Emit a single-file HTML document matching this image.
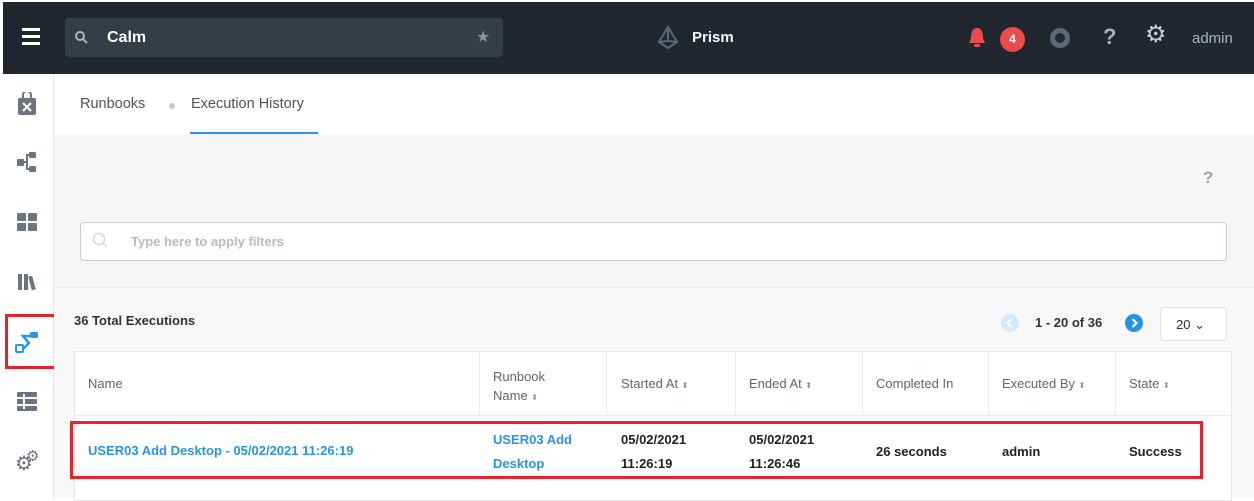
<!DOCTYPE html>
<html><head><meta charset="utf-8"><style>
*{box-sizing:border-box;margin:0;padding:0}
body{width:1254px;height:498px;overflow:hidden;background:#fff;font-family:"Liberation Sans",sans-serif;position:relative}
.a{position:absolute}
.top{left:3px;top:2px;width:1251px;height:72px;background:#22262e}
.th{font-size:13px;color:#5d6771}
.sort{font-size:8px;color:#8a939c}
.vl{position:absolute;top:352px;height:63px;width:1px;background:#ebebeb}
.td{font-size:13px;color:#222;font-weight:bold;line-height:24px}
</style></head><body>
<div class="a top"></div>
<div class="a" style="left:22px;top:28px;width:18px;height:3px;background:#fff;box-shadow:0 7px 0 #fff,0 14px 0 #fff"></div>
<div class="a" style="left:65px;top:18px;width:438px;height:39px;background:#363d47;border-radius:4px"></div>
<svg class="a" style="left:74px;top:30px" width="14" height="14"><circle cx="6" cy="6" r="4" stroke="#aab3bd" stroke-width="2" fill="none"/><line x1="9" y1="9" x2="13" y2="13" stroke="#aab3bd" stroke-width="2"/></svg>
<div class="a" style="left:107px;top:29px;font-size:16px;font-weight:bold;color:#fff">Calm</div>
<div class="a" style="left:476px;top:27px;font-size:16px;color:#8b949e">★</div>
<svg class="a" style="left:656px;top:25px" width="24" height="26"><path d="M12 2 L3 17 L12 23 L21 17 Z M12 2 L12 16 L3 17 M12 16 L21 17" fill="none" stroke="#5c6878" stroke-width="2"/></svg>
<div class="a" style="left:692px;top:29px;font-size:15px;font-weight:bold;color:#fff">Prism</div>
<svg class="a" style="left:966px;top:26px" width="22" height="22"><path d="M11 2 C6 2 5 7 5 12 L3 17 L19 17 L17 12 C17 7 16 2 11 2 Z" fill="#e84c4c"/><rect x="8" y="18" width="6" height="3" rx="1.5" fill="#e84c4c"/></svg>
<div class="a" style="left:1000px;top:27px;width:25px;height:25px;border-radius:50%;background:#ea4b4b;color:#fff;font-size:12px;font-weight:bold;text-align:center;line-height:25px">4</div>
<div class="a" style="left:1050px;top:28px;width:20px;height:20px;border-radius:50%;border:5px solid #5d6878"></div>
<div class="a" style="left:1103px;top:24px;font-size:22px;font-weight:bold;color:#aab3bd">?</div>
<div class="a" style="left:1145px;top:20px;font-size:24px;color:#c8cdd3">⚙</div>
<div class="a" style="left:1192px;top:30px;font-size:15px;color:#aab3bd">admin</div>
<!-- sidebar -->
<div class="a" style="left:53px;top:74px;width:1px;height:424px;background:#e3e6ea"></div>
<svg class="a" style="left:17px;top:92px" width="20" height="24"><rect x="1" y="6" width="18" height="17" rx="2" fill="#6b7580"/><path d="M6 7 V3 a4 4 0 0 1 8 0 V7" stroke="#6b7580" stroke-width="2" fill="none"/><path d="M6 11 L14 19 M14 11 L6 19" stroke="#fff" stroke-width="2"/></svg>
<svg class="a" style="left:16px;top:152px" width="22" height="22"><rect x="1" y="7" width="7" height="7" fill="#6b7580"/><rect x="13" y="0" width="7" height="6" rx="1" fill="#6b7580"/><rect x="13" y="14" width="7" height="6" rx="1" fill="#6b7580"/><path d="M8 10 H11 V3 H13 M11 10 V17 H13" stroke="#6b7580" stroke-width="2" fill="none"/></svg>
<svg class="a" style="left:16px;top:212px" width="22" height="22"><rect x="1" y="1" width="9" height="8" rx="1" fill="#6b7580"/><rect x="12" y="1" width="9" height="8" rx="1" fill="#6b7580"/><rect x="1" y="11" width="9" height="8" rx="1" fill="#6b7580"/><rect x="12" y="11" width="9" height="8" rx="1" fill="#6b7580"/></svg>
<svg class="a" style="left:17px;top:271px" width="22" height="20"><rect x="1" y="3" width="4" height="16" fill="#6b7580"/><rect x="7" y="3" width="4" height="16" fill="#6b7580"/><rect x="13" y="5" width="4" height="14" fill="#6b7580" transform="rotate(-15 15 12)"/></svg>
<div class="a" style="left:5px;top:314px;width:53px;height:55px;border:3px solid #e8212b"></div>
<svg class="a" style="left:15px;top:331px" width="24" height="24"><rect x="1" y="14" width="7" height="7" rx="1" fill="none" stroke="#2b96e8" stroke-width="2"/><rect x="15" y="1" width="8" height="6" rx="1.5" fill="#2b96e8"/><path d="M15 5 H8 L14 12 L8 18" fill="none" stroke="#2b96e8" stroke-width="2.5"/></svg>
<svg class="a" style="left:16px;top:391px" width="22" height="22"><rect x="1" y="1" width="20" height="5" rx="1" fill="#6b7580"/><rect x="1" y="8" width="20" height="5" rx="1" fill="#6b7580"/><rect x="1" y="15" width="20" height="5" rx="1" fill="#6b7580"/><rect x="7" y="3" width="2" height="15" fill="#fff"/></svg>
<div class="a" style="left:15px;top:454px;font-size:20px;color:#6b7580;line-height:20px">⚙</div>
<div class="a" style="left:26px;top:449px;font-size:15px;color:#6b7580;line-height:15px">⚙</div>
<!-- tabs -->
<div class="a" style="left:80px;top:96px;font-size:14.5px;color:#4d555e">Runbooks</div>
<div class="a" style="left:169px;top:103px;width:6px;height:6px;border-radius:50%;background:#c4c9ce"></div>
<div class="a" style="left:191px;top:96px;font-size:14.5px;color:#4d555e">Execution History</div>
<div class="a" style="left:190px;top:132px;width:128px;height:2px;background:#2996e9"></div>
<div class="a" style="left:54px;top:134px;width:1200px;height:153px;background:#f6f6f6"></div>
<div class="a" style="left:54px;top:287px;width:1200px;height:211px;background:#f8f8f8;border-top:1px solid #ececec"></div>
<div class="a" style="left:1203px;top:168px;font-size:17px;font-weight:bold;color:#9aa2aa">?</div>
<div class="a" style="left:80px;top:222px;width:1147px;height:39px;background:#fff;border:1px solid #c5ced6;border-radius:4px"></div>
<svg class="a" style="left:92px;top:232px" width="18" height="18"><circle cx="7" cy="7" r="5.5" stroke="#cfd5da" stroke-width="1.3" fill="none"/><line x1="11" y1="11" x2="15" y2="15" stroke="#cfd5da" stroke-width="1.3"/></svg>
<div class="a" style="left:131px;top:234px;font-size:13px;color:#b4bcc4;font-weight:bold">Type here to apply filters</div>
<div class="a" style="left:74px;top:313px;font-size:13px;font-weight:bold;color:#333">36 Total Executions</div>
<svg class="a" style="left:1001px;top:314px" width="18" height="18"><circle cx="9" cy="9" r="9" fill="#d2e8fb"/><path d="M10.5 5 L6.5 9 L10.5 13" stroke="#fff" stroke-width="2.2" fill="none"/></svg>
<div class="a" style="left:1035px;top:315px;font-size:13px;color:#333;font-weight:bold">1 - 20 of 36</div>
<svg class="a" style="left:1125px;top:314px" width="18" height="18"><circle cx="9" cy="9" r="9" fill="#2293e6"/><path d="M7.5 5 L11.5 9 L7.5 13" stroke="#fff" stroke-width="2.2" fill="none"/></svg>
<div class="a" style="left:1160px;top:307px;width:67px;height:34px;background:#fff;border:1px solid #dde2e6;border-radius:4px;font-size:13px;color:#333;padding:9px 0 0 15px">20 ⌄</div>
<div class="a" style="left:74px;top:351px;width:1158px;height:150px;background:#fff;border:1px solid #e6e6e6"></div>
<div class="a" style="left:75px;top:415px;width:1156px;height:1px;background:#ececec"></div>
<div class="vl" style="left:479px"></div><div class="vl" style="left:606px"></div><div class="vl" style="left:735px"></div><div class="vl" style="left:862px"></div><div class="vl" style="left:988px"></div><div class="vl" style="left:1115px"></div>
<div class="a th" style="left:88px;top:376px">Name</div>
<div class="a th" style="left:493px;top:367px;line-height:19px">Runbook<br>Name <span class="sort">⬍</span></div>
<div class="a th" style="left:621px;top:376px">Started At <span class="sort">⬍</span></div>
<div class="a th" style="left:749px;top:376px">Ended At <span class="sort">⬍</span></div>
<div class="a th" style="left:876px;top:376px">Completed In</div>
<div class="a th" style="left:1002px;top:376px">Executed By <span class="sort">⬍</span></div>
<div class="a th" style="left:1129px;top:376px">State <span class="sort">⬍</span></div>
<div class="a" style="left:70px;top:421px;width:1133px;height:58px;border:3px solid #e8212b"></div>
<div class="a" style="left:88px;top:443px;font-size:13px;color:#2a93e6;font-weight:bold">USER03 Add Desktop - 05/02/2021 11:26:19</div>
<div class="a td" style="left:493px;top:428px;color:#2a93e6">USER03 Add<br>Desktop</div>
<div class="a td" style="left:621px;top:428px">05/02/2021<br>11:26:19</div>
<div class="a td" style="left:749px;top:428px">05/02/2021<br>11:26:46</div>
<div class="a td" style="left:876px;top:440px">26 seconds</div>
<div class="a td" style="left:1002px;top:440px">admin</div>
<div class="a td" style="left:1129px;top:440px">Success</div>
</body></html>
